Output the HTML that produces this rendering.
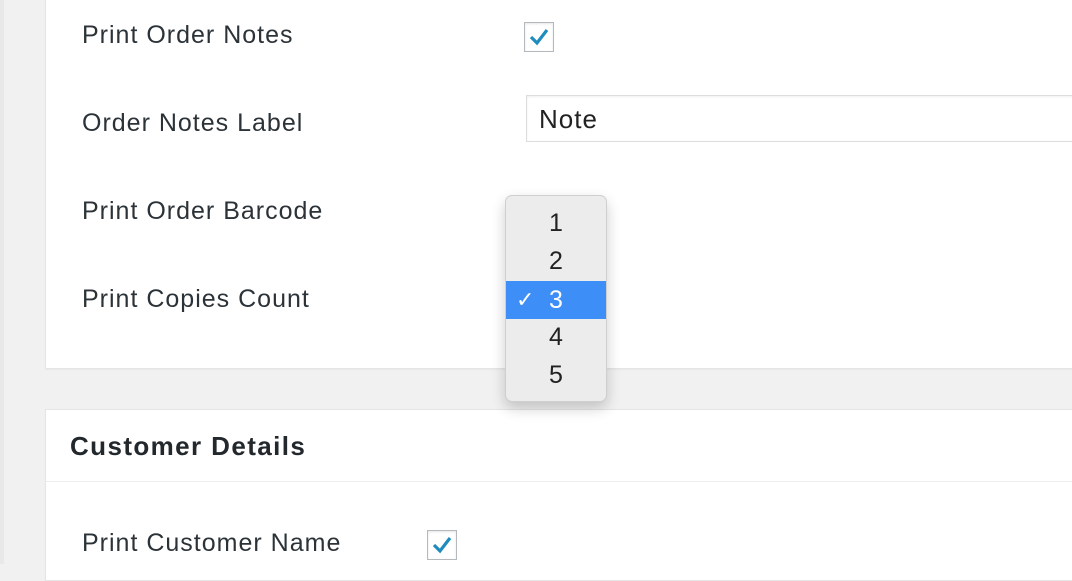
<!DOCTYPE html>
<html><head><style>
body{margin:0;width:1072px;height:564px;overflow:hidden;background:#f1f1f1;font-family:"Liberation Sans",Arial,sans-serif;position:relative;color:#23282d}
.strip{position:absolute;left:0;top:0;width:4px;height:564px;background:#e8e8e8}
.panel{position:absolute;left:45px;width:1040px;background:#fff;border:1px solid #e5e5e5;box-shadow:0 1px 1px rgba(0,0,0,.04)}
.lbl{position:absolute;left:82px;font-size:25px;letter-spacing:1px;color:#2c3338}
.cb{position:absolute;width:28px;height:28px;border:1px solid #b4b9be;background:#fff;box-shadow:inset 0 1px 2px rgba(0,0,0,.1)}
.cb svg{position:absolute;left:3px;top:3px}
.inp{position:absolute;left:526px;top:95px;width:560px;height:47px;border:1px solid #ddd;box-shadow:inset 0 1px 2px rgba(0,0,0,.07);font-size:26px;letter-spacing:1px;line-height:47px;padding-left:12px;box-sizing:border-box;color:#222}
.dd{position:absolute;left:505px;top:195px;width:102px;height:207px;background:#ececec;border:1px solid #cfcfcf;border-radius:7px;box-shadow:0 6px 14px rgba(0,0,0,.2);box-sizing:border-box}
.opt{position:absolute;left:0;width:100%;height:38px;font-size:25px;line-height:38px;color:#222}
.opt span{position:absolute;left:43px}
</style></head><body>
<div class="strip"></div>
<div class="panel" style="top:-2px;height:369px"></div>
<div class="panel" style="top:409px;height:170px"></div>
<div style="position:absolute;left:46px;top:481px;width:1030px;height:1px;background:#eee"></div>

<div class="lbl" style="top:21px">Print Order Notes</div>
<div class="cb" style="left:524px;top:22px"><svg width="22" height="22" viewBox="0 0 22 22"><path d="M3 11 L9 17 L19 4" fill="none" stroke="#1e8cbe" stroke-width="3.2"/></svg></div>
<div class="lbl" style="top:109px">Order Notes Label</div>
<div class="inp">Note</div>
<div class="lbl" style="top:197px">Print Order Barcode</div>
<div class="lbl" style="top:285px">Print Copies Count</div>

<div style="position:absolute;left:70px;top:431px;font-size:26px;letter-spacing:1.4px;font-weight:bold;color:#23282d">Customer Details</div>
<div class="lbl" style="top:529px">Print Customer Name</div>
<div class="cb" style="left:427px;top:530px"><svg width="22" height="22" viewBox="0 0 22 22"><path d="M3 11 L9 17 L19 4" fill="none" stroke="#1e8cbe" stroke-width="3.2"/></svg></div>

<div class="dd">
<div class="opt" style="top:8px"><span>1</span></div>
<div class="opt" style="top:46px"><span>2</span></div>
<div class="opt" style="top:85px;background:#3e8ef7;color:#fff"><span style="left:10px;font-size:22px">✓</span><span>3</span></div>
<div class="opt" style="top:122px"><span>4</span></div>
<div class="opt" style="top:160px"><span>5</span></div>
</div>
</body></html>
